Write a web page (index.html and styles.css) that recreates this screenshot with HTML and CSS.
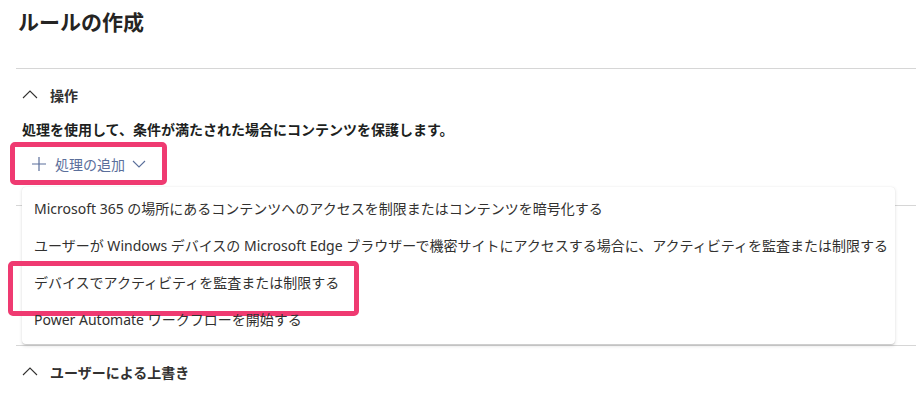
FILE: index.html
```html
<!DOCTYPE html>
<html lang="ja">
<head>
  <meta charset="UTF-8" />
  <title>ルールの作成</title>
  <link rel="stylesheet" href="styles.css">
</head>
<body>

<div class="page">
  <h1 class="title">ルールの作成</h1>

  <!-- 操作 -->
  <section class="section">
    <div class="section-head">
      <svg class="chev" width="16" height="9" viewBox="0 0 16 9"><path d="M1 8 L8 1 L15 8" fill="none" stroke="#323130" stroke-width="1.1"/></svg>
      <span>操作</span>
    </div>
    <p class="desc">処理を使用して、条件が満たされた場合にコンテンツを保護します。</p>

    <div class="menu-wrap">
      <button class="add-btn">
        <svg class="plus" width="14" height="14" viewBox="0 0 14 14"><path d="M7 0 V14 M0 7 H14" stroke="#5b6f9b" stroke-width="1.2"/></svg>
        <span class="label">処理の追加</span>
        <svg width="14" height="8" viewBox="0 0 14 8"><path d="M1 1 L7 7 L13 1" fill="none" stroke="#5b6f9b" stroke-width="1.1"/></svg>
      </button>

      <!-- ドロップダウン -->
      <ul class="dropdown">
        <li>Microsoft 365 の場所にあるコンテンツへのアクセスを制限またはコンテンツを暗号化する</li>
        <li>ユーザーが Windows デバイスの Microsoft Edge ブラウザーで機密サイトにアクセスする場合に、アクティビティを監査または制限する</li>
        <li class="marked">デバイスでアクティビティを監査または制限する</li>
        <li>Power Automate ワークフローを開始する</li>
      </ul>
    </div>

    <div class="hidden-area"></div>
  </section>

  <!-- ユーザーによる上書き -->
  <section class="section">
    <div class="section-head">
      <svg class="chev" width="16" height="9" viewBox="0 0 16 9"><path d="M1 8 L8 1 L15 8" fill="none" stroke="#323130" stroke-width="1.1"/></svg>
      <span>ユーザーによる上書き</span>
    </div>
  </section>
</div>

</body>
</html>
```

FILE: styles.css
```css
* {
  margin: 0;
  padding: 0;
  box-sizing: border-box;
}

body {
  font-family: "Noto Sans", "Noto Sans CJK JP", sans-serif;
  background: #fff;
  color: #323130;
  overflow: hidden;
}

.page {
  padding-left: 16px;
}

.title {
  font-size: 21px;
  font-weight: 700;
  line-height: 28px;
  padding: 8px 0 0 2px;
  height: 69px;
  border-bottom: 1px solid #d6d6d6;
  color: #252423;
}

.section {
  padding-left: 6px;
}

.section-head {
  display: flex;
  align-items: center;
  gap: 12px;
  height: 51px;
  font-size: 14px;
  font-weight: 700;
}

.section-head .chev {
  flex-shrink: 0;
}

.desc {
  font-size: 14px;
  font-weight: 700;
  line-height: 20px;
  color: #201f1e;
}

.menu-wrap {
  position: relative;
  margin-top: 2px;
}

.add-btn {
  display: flex;
  align-items: center;
  margin-left: -12px;
  width: 157px;
  height: 43px;
  padding: 0 0 0 17px;
  border: 5px solid #ef3a71;
  border-radius: 5px;
  background: #fff;
  font-family: inherit;
  font-size: 14px;
  color: #5b6f9b;
}

.add-btn .plus {
  margin-right: 9px;
}

.add-btn .label {
  margin-right: 7px;
}

.dropdown {
  position: absolute;
  top: 45px;
  left: 0;
  width: 873px;
  list-style: none;
  background: #fff;
  padding: 3px 0 6px;
  border-radius: 4px;
  box-shadow: 0 1.6px 3.6px rgba(0, 0, 0, 0.13), 0 0.3px 0.9px rgba(0, 0, 0, 0.11);
  z-index: 10;
}

.dropdown li {
  position: relative;
  height: 37px;
  line-height: 37px;
  padding-left: 12px;
  font-size: 14px;
  color: #323130;
  white-space: nowrap;
}

.dropdown li.marked::before {
  content: "";
  position: absolute;
  left: -14px;
  top: -3px;
  width: 341px;
  height: 45px;
  border: 5px solid #ef3a71;
  border-radius: 5px;
}

.hidden-area {
  margin: 20px 0 0 -6px;
  height: 141px;
  border-top: 1px solid #d6d6d6;
  border-bottom: 1px solid #d6d6d6;
}
```
